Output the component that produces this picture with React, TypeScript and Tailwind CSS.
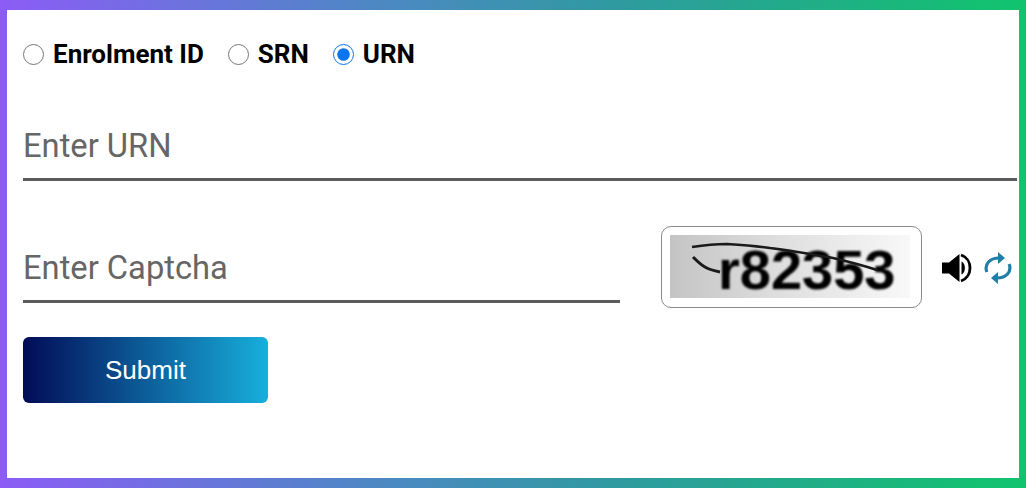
import React from "react";

function Radio({ label, checked, gap }: { label: string; checked?: boolean; gap: string }) {
  return (
    <label className={`flex items-center gap-[9px] ${gap}`}>
      <input type="radio" name="idType" defaultChecked={checked} className="m-0 h-[21px] w-[21px] accent-[#0b74f0]" />
      <span className="text-[26px] leading-[30px] font-bold text-black">{label}</span>
    </label>
  );
}

export default function App() {
  return (
    <div className="h-[488px] w-[1026px] bg-[linear-gradient(90deg,#8b5cf6_0%,#4f86c6_35%,#2f9aa0_60%,#10c46c_100%)] pt-[10px] pr-[7px] pb-[10px] pl-[7px] font-['Roboto',sans-serif]">
      <div className="flex h-[468px] flex-col bg-white pl-4 pr-[2px]">
        <div className="mt-[29px] flex h-[30px] items-center">
          <Radio label="Enrolment ID" gap="mr-[24px]" />
          <Radio label="SRN" gap="mr-[24px]" />
          <Radio label="URN" checked gap="" />
        </div>
        <input
          placeholder="Enter URN"
          className="mt-[60px] h-[52px] w-full border-b-[3px] border-[#5c5c5c] bg-transparent pb-[15px] text-[32.7px] outline-none placeholder:text-[#666]"
        />
        <div className="mt-[45px] flex items-start">
          <input
            placeholder="Enter Captcha"
            className="mt-[25px] h-[52px] w-[597px] border-b-[3px] border-[#5c5c5c] bg-transparent pb-[15px] text-[32.7px] outline-none placeholder:text-[#666]"
          />
          <div className="ml-[41px] h-[82px] w-[261px] rounded-[10px] border border-[#8a8a8a] pt-2 pl-2">
            <div className="relative flex h-[63px] w-[240px] items-center bg-[linear-gradient(90deg,#c4c4c4_0%,#dedede_45%,#f8f8f8_100%)] pl-[48px]">
              <span className="pt-[6px] font-['Liberation_Sans',sans-serif] text-[56px] leading-none font-bold text-black blur-[1px]">
                r82353
              </span>
              <svg className="absolute inset-0" width="240" height="63" viewBox="0 0 240 63" fill="none">
                <path d="M22 12C35 10 48 9 57 9C72 10 86 11 100 13C125 16 145 20 163 23C180 27 195 31 207 35" stroke="#1a1a1a" strokeWidth="2.6" />
                <path d="M23 22C28 27 31 30 35 32C40 35 45 36 50 37" stroke="#1a1a1a" strokeWidth="3" />
              </svg>
            </div>
          </div>
          <div className="mt-[25px] ml-[20px] flex items-center gap-[11px]">
            <svg width="31" height="30" viewBox="0 0 31 30" fill="none">
              <path d="M0 9.5h7L17.5 1v28L7 20.5H0z" fill="#000" />
              <path d="M19.5 8.5c4.5 2 4.5 11 0 13z" fill="#000" />
              <path d="M19 2c12 4 12 22 0 26" stroke="#000" strokeWidth="2.8" />
            </svg>
            <svg width="28" height="34" viewBox="0 0 28 34" fill="none">
              <path d="M2.8 21C0 13 6 7 15 7" stroke="#1f7fa8" strokeWidth="3.2" />
              <path d="M14 1l7 6-7 6z" fill="#1f7fa8" />
              <path d="M25.2 13C28 21 22 27 13 27" stroke="#1f7fa8" strokeWidth="3.2" />
              <path d="M14 33l-7-6 7-6z" fill="#1f7fa8" />
            </svg>
          </div>
        </div>
        <button className="mt-[29px] h-[66px] w-[245px] rounded-[6px] bg-[linear-gradient(90deg,#020c57_0%,#17afdc_100%)] font-['Liberation_Sans',sans-serif] text-[26px] text-white">
          Submit
        </button>
      </div>
    </div>
  );
}
